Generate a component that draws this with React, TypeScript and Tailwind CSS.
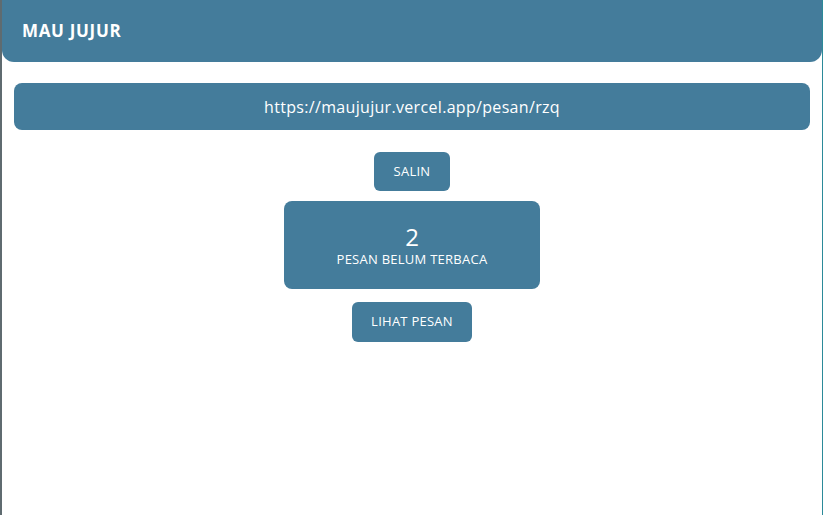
export default function App() {
  const font = { fontFamily: '"Open Sans", "Liberation Sans", sans-serif' }

  return (
    <div
      className="min-h-[515px] bg-white border-l-2 border-r border-l-[#5f6b70] border-r-[#2b8a99]"
      style={font}
    >
      {/* Header */}
      <header className="h-[62px] bg-[#447c9b] rounded-b-xl flex items-center px-5">
        <h1 className="text-white font-bold text-[17px] tracking-[0.04em]">MAU JUJUR</h1>
      </header>

      <main className="px-3 pt-[21px] flex flex-col items-center">
        <div className="w-full h-[47px] bg-[#447c9b] rounded-lg flex items-center justify-center">
          <span className="text-white text-[16px] tracking-[0.02em]">https://maujujur.vercel.app/pesan/rzq</span>
        </div>

        <button className="mt-[22px] w-[76px] h-[39px] bg-[#447c9b] rounded-md text-white text-[13px] tracking-[0.02em]">
          SALIN
        </button>

        <div className="mt-[10px] w-[256px] h-[88px] bg-[#447c9b] rounded-lg flex flex-col items-center justify-center text-white">
          <span className="text-[24px] leading-7">2</span>
          <span className="text-[13px] leading-4 tracking-[0.02em]">PESAN BELUM TERBACA</span>
        </div>

        <button className="mt-[13px] w-[120px] h-[40px] bg-[#447c9b] rounded-md text-white text-[13px] tracking-[0.02em]">
          LIHAT PESAN
        </button>
      </main>
    </div>
  )
}
